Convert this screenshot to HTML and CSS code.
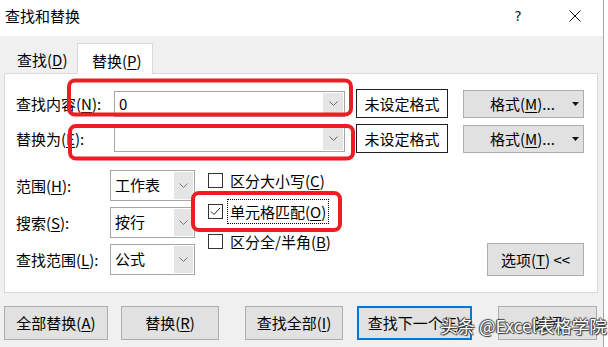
FILE: index.html
```html
<!DOCTYPE html>
<html lang="zh">
<head>
<meta charset="utf-8">
<link rel="stylesheet" href="styles.css">
</head>
<body>
<div class="screen">
  <div class="dialog">
    <div class="titlebar">
      <span class="title">查找和替换</span>
      <span class="help">?</span>
      <svg class="close" width="12" height="12" viewBox="0 0 12 12"><path d="M0.5 0.5 L11.5 11.5 M11.5 0.5 L0.5 11.5" stroke="#111" stroke-width="1" fill="none"/></svg>
    </div>
    <div class="tabs">
      <div class="tab">查找(<u>D</u>)</div>
      <div class="tab active">替换(<u>P</u>)</div>
    </div>
    <div class="panel">
      <div class="row">
        <span class="lbl">查找内容(<u>N</u>):</span>
        <div class="combo"><span class="val">0</span><span class="drop"><svg width="9" height="5" viewBox="0 0 9 5"><polyline points="0.5,0.5 4.5,4.5 8.5,0.5" stroke="#666" fill="none"/></svg></span></div>
        <div class="nofmt">未设定格式</div>
        <div class="btn fmtbtn"><span>格式(<u>M</u>)...</span><svg class="tri" width="7" height="4" viewBox="0 0 7 4"><polygon points="0,0 7,0 3.5,4" fill="#111"/></svg></div>
      </div>
      <div class="row">
        <span class="lbl">替换为(<u>E</u>):</span>
        <div class="combo"><span class="val"></span><span class="drop"><svg width="9" height="5" viewBox="0 0 9 5"><polyline points="0.5,0.5 4.5,4.5 8.5,0.5" stroke="#666" fill="none"/></svg></span></div>
        <div class="nofmt">未设定格式</div>
        <div class="btn fmtbtn"><span>格式(<u>M</u>)...</span><svg class="tri" width="7" height="4" viewBox="0 0 7 4"><polygon points="0,0 7,0 3.5,4" fill="#111"/></svg></div>
      </div>
      <div class="options">
        <div class="selgrid">
          <span class="slbl">范围(<u>H</u>):</span>
          <div class="select"><span class="val">工作表</span><span class="sdrop"><svg width="9" height="5" viewBox="0 0 9 5"><polyline points="0.5,0.5 4.5,4.5 8.5,0.5" stroke="#777" fill="none"/></svg></span></div>
          <span class="slbl">搜索(<u>S</u>):</span>
          <div class="select"><span class="val">按行</span><span class="sdrop"><svg width="9" height="5" viewBox="0 0 9 5"><polyline points="0.5,0.5 4.5,4.5 8.5,0.5" stroke="#777" fill="none"/></svg></span></div>
          <span class="slbl">查找范围(<u>L</u>):</span>
          <div class="select"><span class="val">公式</span><span class="sdrop"><svg width="9" height="5" viewBox="0 0 9 5"><polyline points="0.5,0.5 4.5,4.5 8.5,0.5" stroke="#777" fill="none"/></svg></span></div>
        </div>
        <div class="checks">
          <div class="chk"><span class="box"></span><span class="ctext">区分大小写(<u>C</u>)</span></div>
          <div class="chk"><span class="box"><svg width="13" height="13" viewBox="0 0 13 13"><polyline points="2,6.5 5,9.5 11,3" stroke="#222" stroke-width="1" fill="none"/></svg></span><span class="ctext focus">单元格匹配(<u>O</u>)</span></div>
          <div class="chk"><span class="box"></span><span class="ctext">区分全/半角(<u>B</u>)</span></div>
        </div>
        <div class="btn optbtn">选项(<u>T</u>) &lt;&lt;</div>
      </div>
    </div>
    <div class="actions">
      <div class="btn b1">全部替换(<u>A</u>)</div>
      <div class="btn b2">替换(<u>R</u>)</div>
      <div class="btn b3">查找全部(<u>I</u>)</div>
      <div class="btn b4 default">查找下一个(<u>F</u>)</div>
      <div class="btn b5">关闭</div>
    </div>
  </div>
  <div class="edge"></div>
</div>
<svg class="marks" width="608" height="347" viewBox="0 0 608 347">
  <rect x="69" y="80.5" width="282" height="34" rx="6" ry="6" fill="none" stroke="#ee1d23" stroke-width="4"/>
  <rect x="70" y="126" width="283" height="32.5" rx="6" ry="6" fill="none" stroke="#ee1d23" stroke-width="4"/>
  <rect x="193" y="193" width="147" height="37" rx="6" ry="6" fill="none" stroke="#ee1d23" stroke-width="4"/>
</svg>
<div class="watermark">头条 @Excel表格学院</div>
</body>
</html>
```
FILE: styles.css
```css
* { box-sizing: border-box; margin: 0; padding: 0; }
html, body { width: 608px; height: 347px; overflow: hidden; }
body {
  font-family: "Noto Sans CJK SC", "Microsoft YaHei", sans-serif;
  font-size: 15px;
  color: #000;
  background: #fff;
  position: relative;
}
u { text-decoration: underline; text-underline-offset: 2px; }

.screen { display: flex; height: 347px; }
.dialog {
  width: 604px;
  height: 347px;
  background: #f0f0f0;
  border-right: 1px solid #a8a8a8;
  display: flex;
  flex-direction: column;
  flex: none;
}
.edge { flex: 1; background: #fff; }

.titlebar {
  height: 36px;
  flex: none;
  background: #fff;
  display: flex;
  align-items: center;
  padding: 0 22px 4px 5px;
}
.title { flex: 1; line-height: 20px; }
.help { width: 10px; text-align: center; font-family: "DejaVu Sans", sans-serif; font-size: 14px; color: #222; margin-right: 46px; }
.close { display: block; }

.tabs {
  display: flex;
  align-items: flex-end;
  height: 30px;
  margin-top: 7px;
  padding-left: 4px;
  flex: none;
}
.tab {
  width: 73px;
  height: 28px;
  padding: 3px 0 0 13px;
  line-height: 24px;
}
.tab.active {
  width: 76px;
  height: 31px;
  background: #fff;
  border: 1px solid #d9d9d9;
  border-bottom: none;
  margin-bottom: -1px;
  padding: 5px 0 0 14px;
  position: relative;
  z-index: 1;
}

.panel {
  margin-left: 4px;
  width: 594px;
  height: 220px;
  flex: none;
  background: #fff;
  border: 1px solid #d9d9d9;
  padding: 15px 0 0 11px;
}

.row { display: flex; align-items: center; height: 29px; }
.row + .row { margin-top: 6px; }
.lbl { width: 98px; line-height: 20px; }
.combo {
  width: 231px;
  height: 26px;
  border: 1px solid #a6a6a6;
  background: #fff;
  display: flex;
  justify-content: space-between;
}
.val { padding-left: 4px; line-height: 23px; }
.drop {
  width: 20px;
  margin: 1px;
  background: #e5e5e5;
  display: flex;
  align-items: center;
  justify-content: center;
}
.nofmt {
  width: 92px;
  height: 29px;
  margin-left: 11px;
  border: 1px solid #1f1f1f;
  background: #fff;
  display: flex;
  align-items: center;
  justify-content: center;
}
.btn {
  background: #e1e1e1;
  border: 1px solid #adadad;
  display: flex;
  align-items: center;
  justify-content: center;
  line-height: 20px;
}
.fmtbtn {
  width: 121px;
  height: 28px;
  margin-left: 15px;
  justify-content: flex-start;
  padding: 0 4px 0 26px;
}
.fmtbtn .tri { margin-left: auto; }

.options { display: flex; align-items: flex-start; margin-top: 17px; }
.selgrid {
  display: grid;
  grid-template-columns: 94px 85px;
  grid-auto-rows: 31px;
  row-gap: 6px;
  align-items: center;
}
.slbl { line-height: 20px; }
.select {
  width: 85px;
  height: 31px;
  border: 1px solid #a6a6a6;
  background: #fff;
  display: flex;
  justify-content: space-between;
}
.select .val { line-height: 28px; }
.sdrop {
  width: 19px;
  margin: 1px;
  background: #e5e5e5;
  display: flex;
  align-items: center;
  justify-content: center;
}

.checks { margin-left: 13px; padding-top: 3px; display: flex; flex-direction: column; }
.chk { display: flex; align-items: center; height: 15px; }
.chk + .chk { margin-top: 15.5px; }
.box {
  width: 15px;
  height: 15px;
  border: 1px solid #333;
  background: #fff;
  display: flex;
  align-items: center;
  justify-content: center;
  flex: none;
}
.ctext { margin-left: 7px; line-height: 21px; white-space: nowrap; }
.ctext.focus { margin-left: 5px; padding: 1px 2px; outline: 1px dotted #000; }

.optbtn {
  width: 97px;
  height: 33px;
  margin-left: auto;
  margin-right: 13px;
  margin-top: 73px;
}

.actions { display: flex; margin-top: 13px; padding-left: 4px; flex: none; }
.actions .btn { height: 34px; }
.b1 { width: 104px; }
.b2 { width: 98px; margin-left: 13px; }
.b3 { width: 98px; margin-left: 26px; }
.b4 { width: 115px; margin-left: 14px; }
.b5 { width: 99px; margin-left: 26px; }
.default { border: 2px solid #0078d7; }

.marks { position: absolute; left: 0; top: 0; pointer-events: none; }
.watermark {
  position: absolute;
  left: 440px;
  top: 315px;
  font-size: 17.5px;
  line-height: 22px;
  color: #fff;
  white-space: nowrap;
  text-shadow: 0 0 1px #222, 1px 1px 1px #333, -1px 0 1px #444, 0 -1px 1px #444;
  pointer-events: none;
}
```
